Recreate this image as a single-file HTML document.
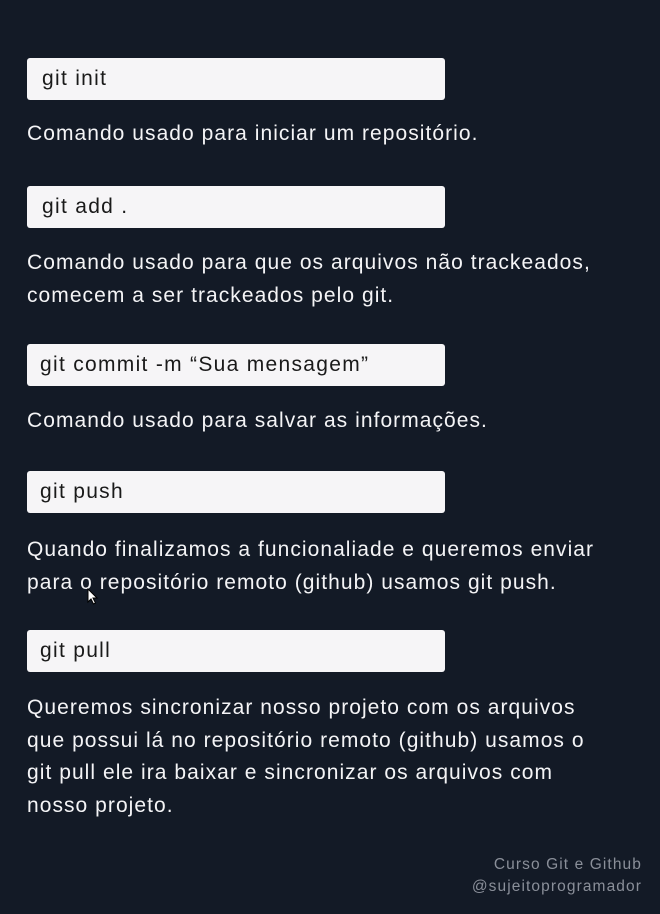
<!DOCTYPE html>
<html><head><meta charset="utf-8"><style>
html,body{margin:0;padding:0;}
body{width:660px;height:914px;background:#131a26;position:relative;overflow:hidden;font-family:"Liberation Sans",sans-serif;color:#f4f4f6;}
.box{position:absolute;left:27px;width:418px;height:42px;background:#f6f5f7;border-radius:3px;color:#1a1a1a;font-size:21px;letter-spacing:1.3px;line-height:42px;box-sizing:border-box;padding-left:13px;white-space:nowrap;}
.t{position:absolute;left:27px;font-size:21px;line-height:32.5px;white-space:nowrap;letter-spacing:1.05px;}
.f{position:absolute;right:18px;text-align:right;color:#8a8f99;font-size:15.5px;line-height:22px;letter-spacing:1.1px;}
</style></head><body>
<div class="box" style="top:58px;padding-left:15px">git init</div>
<div class="t" style="top:118px">Comando usado para iniciar um repositório.</div>
<div class="box" style="top:186px;padding-left:15px">git add .</div>
<div class="t" style="top:247px">Comando usado para que os arquivos não trackeados,<br>comecem a ser trackeados pelo git.</div>
<div class="box" style="top:344px">git commit -m “Sua mensagem”</div>
<div class="t" style="top:405px">Comando usado para salvar as informações.</div>
<div class="box" style="top:471px">git push</div>
<div class="t" style="top:534px">Quando finalizamos a funcionaliade e queremos enviar<br>para o repositório remoto (github) usamos git push.</div>
<div class="box" style="top:630px">git pull</div>
<div class="t" style="top:692px">Queremos sincronizar nosso projeto com os arquivos<br>que possui lá no repositório remoto (github) usamos o<br>git pull ele ira baixar e sincronizar os arquivos com<br>nosso projeto.</div>
<div class="f" style="top:854px">Curso Git e Github<br>@sujeitoprogramador</div>
<svg style="position:absolute;left:87px;top:588px" width="12" height="18" viewBox="0 0 12 18"><path d="M1 1 L1 14 L4 11 L6.5 16 L8.5 15 L6 10 L10 10 Z" fill="#fff" stroke="#000" stroke-width="1"/></svg>
</body></html>
